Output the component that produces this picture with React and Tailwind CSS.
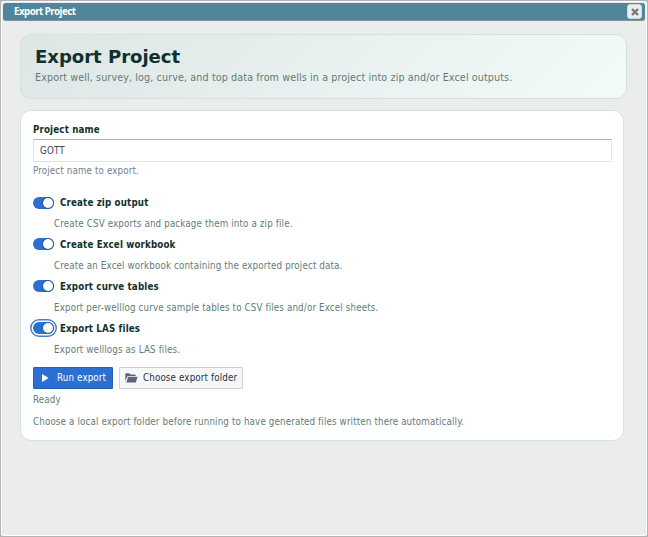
import React, { useState } from 'react';

const initialOptions = [
    { id: "zip", label: "Create zip output", help: "Create CSV exports and package them into a zip file." },
    { id: "excel", label: "Create Excel workbook", help: "Create an Excel workbook containing the exported project data." },
    { id: "curves", label: "Export curve tables", help: "Export per-welllog curve sample tables to CSV files and/or Excel sheets." },
    { id: "las", label: "Export LAS files", help: "Export welllogs as LAS files." },
];

function Toggle({ checked, focused, onChange }) {
    return (
        <button
            role="switch"
            aria-checked={checked}
            onClick={onChange}
            className={`flex h-[12px] w-[21px] shrink-0 items-center rounded-full p-px outline-none ${
                checked ? 'justify-end bg-[#2b6fd0]' : 'justify-start bg-[#8f99a8]'
            } ${focused ? 'shadow-[0_0_0_1.5px_#ffffff,0_0_0_3px_#4a7fc8]' : ''}`}
        >
            <span className="h-[10px] w-[10px] rounded-full bg-white shadow-[0_0_0_1px_#2459ab]" />
        </button>
    );
}

export default function App() {
    const [enabled, setEnabled] = useState({ zip: true, excel: true, curves: true, las: true });
    const [focusedId, setFocusedId] = useState("las");
    const [projectName, setProjectName] = useState("GOTT");

    const toggle = (id) => {
        setEnabled({ ...enabled, [id]: !enabled[id] });
        setFocusedId(id);
    };

    return (
        <div className="h-[537px] w-[648px] overflow-hidden bg-[#b4b4b4] p-px font-['DejaVu_Sans_Condensed','DejaVu_Sans',sans-serif] text-[9.7px] leading-[12px] tracking-[0.15px]">
            <div className="h-full rounded-[2px] bg-white p-px">
                <div className="h-full bg-[#ebedec] px-px pt-px">
                    <div className="flex h-[18px] items-center justify-between rounded-[3px] border-b border-[#7d949e] bg-[#4f869b] pl-[11px] pr-[3px]">
                        <span className="whitespace-nowrap font-['Noto_Sans',sans-serif] text-[9.8px] font-bold tracking-[-0.55px] text-white">Export Project</span>
                        <button className="flex h-[15px] w-[15px] items-center justify-center rounded-[3px] border border-[#d4d7d7] bg-[#ededed]">
                            <svg width="8" height="8" viewBox="0 0 8 8" stroke="#777777" strokeWidth="2.4">
                                <path d="M1 1L7 7M7 1L1 7" />
                            </svg>
                        </button>
                    </div>

                    <div className="pl-[17px] pt-[13px]">
                        <header className="h-[65px] w-[607px] whitespace-nowrap rounded-[11px] border border-[#cfe3dd] bg-linear-135 from-[#dde6e5] to-[#f2fbf8] pl-[14px] pt-[11px] font-['DejaVu_Sans',sans-serif]">
                            <h1 className="text-[18.1px] font-bold leading-[22px] tracking-[-0.05px] text-[#12302d]">Export Project</h1>
                            <p className="mt-[4px] text-[9.6px] leading-[12px] tracking-[0.11px] text-[#637b76]">Export well, survey, log, curve, and top data from wells in a project into zip and/or Excel outputs.</p>
                        </header>

                        <main className="mt-[11px] h-[331px] w-[604px] whitespace-nowrap rounded-[11px] border border-[#d3e4df] bg-white px-[12px] pt-[13px] text-[#637b76]">
                            <label className="block font-bold text-[#12302d]">Project name</label>
                            <input
                                value={projectName}
                                onChange={(e) => setProjectName(e.target.value)}
                                className="mt-[3px] block h-[23px] w-[579px] border border-[#e3e3e3] border-t-[#b3b3b3] px-[6px] pb-px text-[#404854] outline-none"
                            />
                            <p className="mt-[3px] text-[#73808c]">Project name to export.</p>

                            <div className="mt-[19.6px]">
                                {initialOptions.map((option) => (
                                    <div key={option.id} className="h-[41.8px]">
                                        <div className="flex h-[12px] items-center gap-[6px]">
                                            <Toggle
                                                checked={enabled[option.id]}
                                                focused={focusedId === option.id}
                                                onChange={() => toggle(option.id)}
                                            />
                                            <span className="pt-[1.2px] font-bold text-[#12302d]">{option.label}</span>
                                        </div>
                                        <p className="ml-[21px] mt-[9.9px]">{option.help}</p>
                                    </div>
                                ))}
                            </div>

                            <div className="mt-[3.2px] flex gap-[6px]">
                                <button className="flex h-[22px] w-[80px] items-center rounded-[1px] border border-[#2560b8] bg-[#2b6fd0] pl-[7px] text-white">
                                    <svg width="8" height="8" viewBox="0 0 8 8" fill="#ffffff">
                                        <path d="M1 0L7.6 4L1 8Z" />
                                    </svg>
                                    <span className="ml-[8px]">Run export</span>
                                </button>
                                <button className="flex h-[22px] w-[124px] items-center rounded-[1px] border border-[#cfd1d4] bg-[#f6f7f8] pl-[5px] text-[#2b333f]">
                                    <svg width="13" height="10" viewBox="0 0 13 10" fill="#5c6576">
                                        <path d="M0.3 8V0.9Q0.3 0.3 0.9 0.3H4.2L5.6 1.5H10Q10.6 1.5 10.6 2.1V3H3.2Q2.5 3 2.3 3.6Z" />
                                        <path d="M3.2 3.8H12.6L10.9 9.2Q10.8 9.6 10.3 9.6H1.2Z" />
                                    </svg>
                                    <span className="ml-[5px]">Choose export folder</span>
                                </button>
                            </div>
                            <p className="mt-[5px]">Ready</p>
                            <p className="mt-[10.4px]">Choose a local export folder before running to have generated files written there automatically.</p>
                        </main>
                    </div>
                </div>
            </div>
        </div>
    );
}
